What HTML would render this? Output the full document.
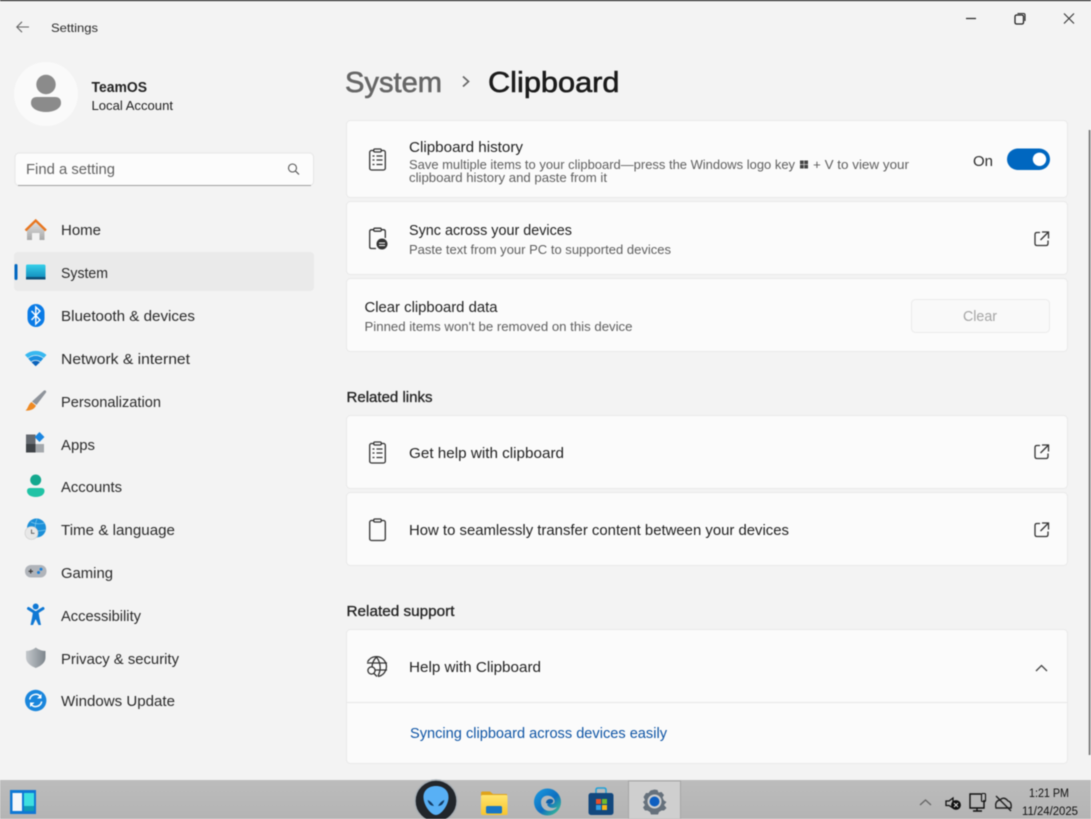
<!DOCTYPE html>
<html lang="en">
<head>
<meta charset="utf-8">
<title>Settings</title>
<style>
html,body{margin:0;padding:0;width:1091px;height:819px;overflow:hidden;background:#f3f3f3}
svg{display:block;position:absolute;left:0;top:0;filter:blur(.4px)}
text{font-family:"Liberation Sans",sans-serif;white-space:pre}
.nav{font-size:14.5px;fill:#2a2a2a}
.t{font-size:14.5px;fill:#222}
.s{font-size:12.5px;fill:#5f5f5f}
.ic{fill:none;stroke:#333;stroke-width:1.3}
</style>
</head>
<body>
<svg width="1091" height="819" viewBox="0 0 1091 819" xmlns="http://www.w3.org/2000/svg">
<defs>
<linearGradient id="tb" x1="0" y1="0" x2="0" y2="1"><stop offset="0" stop-color="#bcbcbc"/><stop offset="1" stop-color="#b4b4b4"/></linearGradient>
<linearGradient id="sys" x1="0" y1="0" x2="0" y2="1"><stop offset="0" stop-color="#35d0ea"/><stop offset="1" stop-color="#0f86b8"/></linearGradient>
<linearGradient id="folder" x1="0" y1="0" x2="0" y2="1"><stop offset="0" stop-color="#ffe46e"/><stop offset="1" stop-color="#f8c52c"/></linearGradient>
<linearGradient id="edge" x1="0" y1="0" x2="1" y2="1"><stop offset="0" stop-color="#1b9de2"/><stop offset=".55" stop-color="#0e6fc0"/><stop offset="1" stop-color="#46d08a"/></linearGradient>
<linearGradient id="shield" x1="0" y1="0" x2="1" y2="0"><stop offset="0" stop-color="#c4c8cc"/><stop offset="1" stop-color="#7d858c"/></linearGradient>
<linearGradient id="home" x1="0" y1="0" x2="0" y2="1"><stop offset="0" stop-color="#e4e4e4"/><stop offset="1" stop-color="#a8a8a8"/></linearGradient>
</defs>

<rect width="1091" height="819" fill="#f3f3f3"/>
<rect width="1091" height="1" fill="#000"/>

<!-- Title bar -->
<path d="M29 27H17M22 21.8L16.8 27L22 32.2" fill="none" stroke="#666" stroke-width="1.1"/>
<text x="51" y="32" font-size="12" fill="#2a2a2a" textLength="47" lengthAdjust="spacingAndGlyphs">Settings</text>
<path d="M966 18.5H976" stroke="#222" stroke-width="1.2"/>
<rect x="1015" y="15" width="8.5" height="9" rx="1.5" fill="none" stroke="#222" stroke-width="1.3"/>
<path d="M1017.5 13.5H1023.5Q1025 13.5 1025 15V21" fill="none" stroke="#222" stroke-width="1.1"/>
<path d="M1064 13.5L1074 23.5M1074 13.5L1064 23.5" stroke="#333" stroke-width="1.1"/>

<!-- Profile -->
<circle cx="46" cy="94" r="32" fill="#fafafa"/>
<circle cx="46" cy="84.5" r="9.7" fill="#8b8b8b"/>
<path d="M31 103Q31 97 37 97H55Q61 97 61 103C61 108.5 54 112 46 112C38 112 31 108.5 31 103Z" fill="#8b8b8b"/>
<text x="91.5" y="92" font-size="14.5" font-weight="700" fill="#222" textLength="55.5" lengthAdjust="spacingAndGlyphs">TeamOS</text>
<text x="91.5" y="110" font-size="12.5" fill="#222" textLength="81.5" lengthAdjust="spacingAndGlyphs">Local Account</text>

<!-- Search -->
<rect x="15" y="153" width="298.5" height="32.5" rx="4" fill="#fcfcfc" stroke="#e6e6e6"/>
<path d="M18 185.5H311" stroke="#a0a0a0" stroke-width="1"/>
<text x="26" y="174" font-size="14.5" fill="#626262" textLength="89" lengthAdjust="spacingAndGlyphs">Find a setting</text>
<circle cx="292.5" cy="168" r="4" fill="none" stroke="#555" stroke-width="1.1"/>
<path d="M295.5 171L299 174.5" stroke="#555" stroke-width="1.2"/>

<!-- Nav selected -->
<rect x="14" y="252" width="300" height="39" rx="4" fill="#eaeaea"/>
<rect x="14.5" y="264" width="3" height="16" rx="1.5" fill="#0067c0"/>

<!-- Nav icons -->
<!-- Home -->
<path d="M27 228V240H32V233H39.5V240H44.5V228L35.7 220.5Z" fill="url(#home)"/>
<path d="M25.5 230.5L35.7 220.5L46 230.5" fill="none" stroke="#e8761f" stroke-width="2.4"/>
<!-- System -->
<rect x="26" y="264.5" width="19.5" height="15" rx="1.5" fill="url(#sys)"/>
<rect x="26" y="277" width="19.5" height="2.5" fill="#0e4f78"/>
<!-- Bluetooth -->
<rect x="27.5" y="304" width="17" height="23" rx="8.5" fill="#0a7be6"/>
<path d="M31.5 311L40 320L35.8 324V307L40 311L31.5 320" fill="none" stroke="#fff" stroke-width="1.4"/>
<!-- Wifi -->
<path d="M25 355C31 349.5 40.5 349.5 46.5 355L43.8 358C38.5 354 33 354 27.8 358Z" fill="#37b8f0"/>
<path d="M28.2 358.5C33 354.8 38.5 354.8 43.3 358.5L40.4 361.7C37.5 359.5 34 359.5 31.1 361.7Z" fill="#1a8fe0"/>
<path d="M31.5 362.2C34 360.2 37.5 360.2 40 362.2L35.7 366.2Z" fill="#0b63bb"/>
<!-- Brush -->
<path d="M44 390.5C46 390 46.5 391.5 46 392.5L36.5 405L32 401.5Z" fill="#8f949b"/>
<path d="M31.5 402L36 405.8C34 409.5 30 411 25.5 410.5C28 409 28 404.5 31.5 402Z" fill="#ee8a24"/>
<!-- Apps -->
<rect x="26" y="434.5" width="9.5" height="9.5" fill="#64696f"/>
<rect x="26" y="444" width="9.5" height="8.5" fill="#3f4347"/>
<rect x="35.5" y="444" width="8.5" height="8.5" fill="#a4a8ac"/>
<rect x="36" y="433.5" width="7" height="7" fill="#1a86e0" transform="rotate(45 39.5 437)"/>
<!-- Accounts -->
<circle cx="35.7" cy="480" r="5.5" fill="#13a88e"/>
<path d="M27 491Q27 488 30 488H41.5Q44.5 488 44.5 491C44.5 494.5 41 497 35.7 497C30.5 497 27 494.5 27 491Z" fill="#20c3a5"/>
<!-- Time -->
<circle cx="36.5" cy="528" r="9.5" fill="#1b8fd8"/>
<path d="M31 522Q37 525 45 523M37 519Q33 528 38 537.5M28 530Q36 532 45.5 530" fill="none" stroke="#7ac8ef" stroke-width=".7"/>
<circle cx="31.5" cy="533" r="6.5" fill="#e8e8e8" stroke="#c8c8c8" stroke-width=".6"/>
<path d="M31.5 529.5V533.3H34.5" fill="none" stroke="#555" stroke-width=".9"/>
<!-- Gaming -->
<rect x="25" y="565" width="21.5" height="12.5" rx="6" fill="#b0b4ba"/>
<path d="M28.5 571.3H33M30.7 569V573.5" stroke="#333" stroke-width="1.1"/>
<circle cx="41" cy="569.3" r="1.5" fill="#1a7fd8"/><circle cx="38.5" cy="572.5" r="1.5" fill="#1a7fd8"/>
<!-- Accessibility -->
<circle cx="35.7" cy="606.5" r="3" fill="#0f78d4"/>
<path d="M28.5 608.5L35.7 613L43 608.5M35.7 612.5V618" fill="none" stroke="#0f78d4" stroke-width="3" stroke-linecap="round" stroke-linejoin="round"/>
<path d="M33 612H38.5L39.5 618L41 625H38.5L35.7 619L33 625H30.5L32 618Z" fill="#0f78d4"/>
<!-- Shield -->
<path d="M35.8 647.5C39 650 42 650.8 45.5 651V657.5C45.5 662.5 41 666 35.8 668C30.5 666 26 662.5 26 657.5V651C29.5 650.8 32.5 650 35.8 647.5Z" fill="url(#shield)"/>
<!-- Update -->
<circle cx="35.7" cy="700.5" r="10.7" fill="#1a86dc"/>
<path d="M29.7 699.5A6.2 6.2 0 0 1 40.5 696.5M41.7 701.5A6.2 6.2 0 0 1 31 704.5" fill="none" stroke="#fff" stroke-width="1.5"/>
<path d="M41.5 694V698.5H37ZM30 707V702.5H34.5Z" fill="#fff"/>

<!-- Nav text -->
<g class="nav">
<text x="61" y="235" textLength="40" lengthAdjust="spacingAndGlyphs">Home</text>
<text x="61" y="278" textLength="47" lengthAdjust="spacingAndGlyphs">System</text>
<text x="61" y="321" textLength="134" lengthAdjust="spacingAndGlyphs">Bluetooth &amp; devices</text>
<text x="61" y="364" textLength="129" lengthAdjust="spacingAndGlyphs">Network &amp; internet</text>
<text x="61" y="407" textLength="100" lengthAdjust="spacingAndGlyphs">Personalization</text>
<text x="61" y="450" textLength="34" lengthAdjust="spacingAndGlyphs">Apps</text>
<text x="61" y="492" textLength="61" lengthAdjust="spacingAndGlyphs">Accounts</text>
<text x="61" y="535" textLength="114" lengthAdjust="spacingAndGlyphs">Time &amp; language</text>
<text x="61" y="578" textLength="52" lengthAdjust="spacingAndGlyphs">Gaming</text>
<text x="61" y="621" textLength="80" lengthAdjust="spacingAndGlyphs">Accessibility</text>
<text x="61" y="664" textLength="118" lengthAdjust="spacingAndGlyphs">Privacy &amp; security</text>
<text x="61" y="706" textLength="114" lengthAdjust="spacingAndGlyphs">Windows Update</text>
</g>

<!-- Title -->
<text x="345" y="92" font-size="29" fill="#666" textLength="97" lengthAdjust="spacingAndGlyphs" style="stroke:#666;stroke-width:.6">System</text>
<path d="M463 76.5L468.5 81.5L463 86.5" fill="none" stroke="#666" stroke-width="1.7"/>
<text x="488" y="92" font-size="29" fill="#1b1b1b" textLength="131.5" lengthAdjust="spacingAndGlyphs" style="stroke:#1b1b1b;stroke-width:.6">Clipboard</text>

<!-- Cards -->
<g fill="#fbfbfb" stroke="#e9e9e9">
<rect x="346.5" y="120.5" width="721" height="77" rx="4"/>
<rect x="346.5" y="201.5" width="721" height="73" rx="4"/>
<rect x="346.5" y="278.5" width="721" height="73" rx="4"/>
<rect x="346.5" y="415.5" width="721" height="73" rx="4"/>
<rect x="346.5" y="492.5" width="721" height="73" rx="4"/>
<rect x="346.5" y="629.5" width="721" height="134" rx="4"/>
</g>
<path d="M347 702.5H1067" stroke="#e6e6e6"/>

<!-- Scrollbar -->
<rect x="1088.7" y="130" width="1.8" height="625" fill="#777"/>

<!-- Card 1 -->
<g class="ic">
<rect x="369.7" y="150.5" width="15.6" height="19.5" rx="1.8"/>
<rect x="373.7" y="149" width="7.6" height="3" rx="1.2" fill="#fbfbfb"/>
<path d="M376.5 156H382.5M376.5 160H382.5M376.5 164.5H382.5M372.5 156H374.5M372.5 160H374.5M372.5 164.5H374.5"/>
</g>
<text x="409" y="152" class="t" textLength="114" lengthAdjust="spacingAndGlyphs">Clipboard history</text>
<text x="409" y="169" class="s" textLength="386" lengthAdjust="spacingAndGlyphs">Save multiple items to your clipboard—press the Windows logo key</text>
<g fill="#444"><rect x="800" y="160.5" width="3.7" height="3.7"/><rect x="804.3" y="160.5" width="3.7" height="3.7"/><rect x="800" y="164.8" width="3.7" height="3.7"/><rect x="804.3" y="164.8" width="3.7" height="3.7"/></g>
<text x="813" y="169" class="s" textLength="96" lengthAdjust="spacingAndGlyphs">+ V to view your</text>
<text x="409" y="182" class="s" textLength="198" lengthAdjust="spacingAndGlyphs">clipboard history and paste from it</text>
<text x="973" y="166" font-size="14.5" fill="#2a2a2a" textLength="20" lengthAdjust="spacingAndGlyphs">On</text>
<rect x="1007" y="148.5" width="43" height="21.5" rx="10.75" fill="#0067c0"/>
<circle cx="1039.5" cy="159.3" r="6.7" fill="#fff"/>

<!-- Card 2 -->
<g class="ic">
<path d="M376 248.5H371.5Q369.7 248.5 369.7 246.7V231.5Q369.7 229.7 371.5 229.7H383.5Q385.3 229.7 385.3 231.5V238"/>
<rect x="373.7" y="228.2" width="7.6" height="3" rx="1.2" fill="#fbfbfb"/>
</g>
<circle cx="382" cy="244" r="5.5" fill="#333"/>
<path d="M379 243H385M379 245.5H385" stroke="#fbfbfb" stroke-width="1"/>
<text x="409" y="235" class="t" textLength="163" lengthAdjust="spacingAndGlyphs">Sync across your devices</text>
<text x="409" y="254" class="s" textLength="262" lengthAdjust="spacingAndGlyphs">Paste text from your PC to supported devices</text>
<g class="ic" stroke="#444">
<path d="M1040 232.5H1037Q1035 232.5 1035 234.5V243.5Q1035 245.5 1037 245.5H1046Q1048 245.5 1048 243.5V240.5M1042 232H1048.5V238.5M1048.5 232L1040.5 240"/>
</g>

<!-- Card 3 -->
<text x="364.5" y="312" class="t" textLength="133" lengthAdjust="spacingAndGlyphs">Clear clipboard data</text>
<text x="364.5" y="331" class="s" textLength="268" lengthAdjust="spacingAndGlyphs">Pinned items won't be removed on this device</text>
<rect x="911.5" y="299.5" width="138" height="33" rx="4" fill="#f9f9f9" stroke="#ebebeb"/>
<text x="963" y="321" font-size="14.5" fill="#a5a5a5" textLength="34" lengthAdjust="spacingAndGlyphs">Clear</text>

<!-- Related links -->
<text x="346.5" y="402" font-size="14.5" fill="#222" textLength="86" lengthAdjust="spacingAndGlyphs" style="stroke:#222;stroke-width:.3">Related links</text>
<g class="ic">
<rect x="369.7" y="443.5" width="15.6" height="19.5" rx="1.8"/>
<rect x="373.7" y="442" width="7.6" height="3" rx="1.2" fill="#fbfbfb"/>
<path d="M376.5 449H382.5M376.5 453H382.5M376.5 457.5H382.5M372.5 449H374.5M372.5 453H374.5M372.5 457.5H374.5"/>
</g>
<text x="409" y="458" class="t" textLength="155" lengthAdjust="spacingAndGlyphs">Get help with clipboard</text>
<g class="ic" stroke="#444" transform="translate(0,213)"><path d="M1040 232.5H1037Q1035 232.5 1035 234.5V243.5Q1035 245.5 1037 245.5H1046Q1048 245.5 1048 243.5V240.5M1042 232H1048.5V238.5M1048.5 232L1040.5 240"/></g>

<g class="ic">
<rect x="369.7" y="520.5" width="15.6" height="20" rx="1.8"/>
<rect x="373.7" y="519" width="7.6" height="3" rx="1.2" fill="#fbfbfb"/>
</g>
<text x="409" y="535" class="t" textLength="380" lengthAdjust="spacingAndGlyphs">How to seamlessly transfer content between your devices</text>
<g class="ic" stroke="#444" transform="translate(0,291)"><path d="M1040 232.5H1037Q1035 232.5 1035 234.5V243.5Q1035 245.5 1037 245.5H1046Q1048 245.5 1048 243.5V240.5M1042 232H1048.5V238.5M1048.5 232L1040.5 240"/></g>

<!-- Related support -->
<text x="346.5" y="616" font-size="14.5" fill="#222" textLength="108" lengthAdjust="spacingAndGlyphs" style="stroke:#222;stroke-width:.3">Related support</text>
<g class="ic">
<path d="M367.5 662A10 10 0 1 1 378 676.5"/>
<path d="M372 668A15 15 0 0 1 376.5 657Q383 666 378 676M367 663H387M369 670H387"/>
<circle cx="371.5" cy="670.5" r="3.6" fill="#fbfbfb"/>
<path d="M374 673.5L377 676.5"/>
</g>
<text x="409" y="672" class="t" textLength="132" lengthAdjust="spacingAndGlyphs">Help with Clipboard</text>
<path d="M1036 671L1041.5 665.5L1047 671" fill="none" stroke="#444" stroke-width="1.3"/>
<text x="410" y="738" font-size="14.5" fill="#0f55a5" textLength="257" lengthAdjust="spacingAndGlyphs">Syncing clipboard across devices easily</text>

<!-- Taskbar -->
<rect x="0" y="780" width="1091" height="39" fill="url(#tb)"/>
<rect x="10" y="790" width="26" height="24" fill="#0f78d4"/>
<rect x="12.5" y="793" width="9.5" height="18" fill="#f4f6f9"/>
<rect x="24" y="793" width="10" height="13" fill="#3ddfe0"/>
<rect x="24" y="806" width="10" height="5" fill="#0f9bb5"/>

<!-- Alienware -->
<circle cx="436" cy="801" r="21" fill="#22262b" stroke="#a6adb3" stroke-width="1.4"/>
<path d="M436 786C444 786 449 791 448.5 798C448 806 441 815 436 815C431 815 424 806 423.5 798C423 791 428 786 436 786Z" fill="#58b0f5"/>
<path d="M427.5 800Q431 801 434 806Q429 806 427.5 800ZM444.5 800Q441 801 438 806Q443 806 444.5 800Z" fill="#123a63"/>

<!-- Folder -->
<path d="M481 793Q481 791.5 482.5 791.5H490L493 794H507V796H481Z" fill="#e0a31a"/>
<rect x="481" y="795" width="26.5" height="20" rx="1.5" fill="url(#folder)"/>
<rect x="486" y="806" width="16" height="7.5" rx="1.5" fill="#1677c6"/>

<!-- Edge -->
<circle cx="547.5" cy="802" r="13.5" fill="url(#edge)"/>
<path d="M541 802C541 796 548 794 552 797C556 800 555 804 552 804H547C548 808 553 809 557 807C554 812 546 812 543 808C541.5 806.5 541 804 541 802Z" fill="#bcbcbc" opacity=".95"/>
<path d="M546 803C546 799 551 798 553 800C554 802 552 804 549 804Z" fill="#0d5ea8"/>

<!-- Store -->
<path d="M596 794V790Q596 788 598 788H604Q606 788 606 790V794" fill="none" stroke="#1fa0d8" stroke-width="1.5"/>
<rect x="588.5" y="793" width="25" height="22" rx="2.5" fill="#12487e"/>
<rect x="596" y="799" width="5" height="5" fill="#e8502a"/><rect x="602" y="799" width="5" height="5" fill="#6fbb2c"/>
<rect x="596" y="805" width="5" height="5" fill="#2f9fe6"/><rect x="602" y="805" width="5" height="5" fill="#f8b818"/>

<!-- Settings active -->
<rect x="628.5" y="781" width="52" height="38" fill="#cfcfcf" stroke="#a6a6a6"/>
<path d="M654.5 789.5L657.5 790L658.5 792.5L661.5 792L664 795L662.5 797.5L664 800.5L666.5 802L664 805L666.5 808L664 810.5L661.5 810.5L659 812L658 814.5H651L650 812L647.5 810.5L645 810.5L643 807.5L645 805L643 802L645 800L643.5 797L646 793L648.5 793L650.5 790.5Z" fill="#66717c"/>
<circle cx="654.5" cy="801.5" r="7" fill="#cfcfcf"/>
<circle cx="654.5" cy="801.5" r="5" fill="#0f5fc0"/>

<!-- Tray -->
<path d="M920 805L925.5 800L931 805" fill="none" stroke="#666" stroke-width="1.3"/>
<path d="M946 801H949L953 798V808L949 805.5H946Z" fill="none" stroke="#111" stroke-width="1.3"/>
<circle cx="956" cy="805" r="4.9" fill="#111"/>
<path d="M954 803L958 807M958 803L954 807" stroke="#ddd" stroke-width="1"/>
<path d="M981 794H970V808H984V800M973 811H982M977 808V811" fill="none" stroke="#111" stroke-width="1.4"/>
<rect x="981.5" y="793.5" width="4" height="8" rx="1" fill="none" stroke="#111" stroke-width="1.1"/>
<path d="M996 808Q994.5 801 1000 800Q1004 796 1008 801Q1012 802 1011 808Z" fill="none" stroke="#222" stroke-width="1.4"/>
<path d="M996 796L1011 811" stroke="#222" stroke-width="1.4"/>
<text x="1029" y="797" font-size="11.5" fill="#111" textLength="40" lengthAdjust="spacingAndGlyphs">1:21 PM</text>
<text x="1022" y="815" font-size="11.5" fill="#111" textLength="56" lengthAdjust="spacingAndGlyphs">11/24/2025</text>
</svg>
</body>
</html>
